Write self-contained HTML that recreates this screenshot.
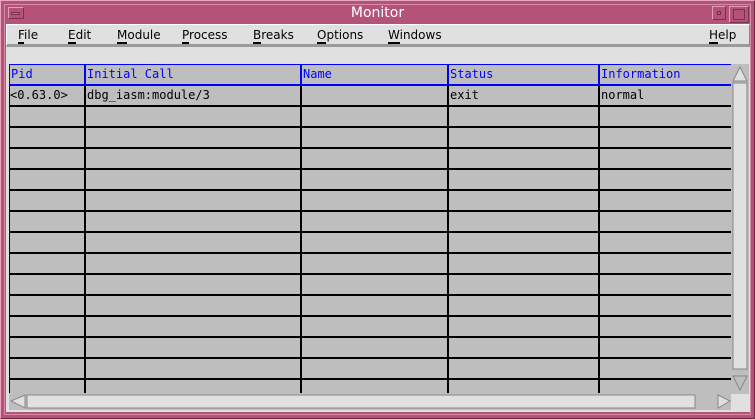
<!DOCTYPE html>
<html><head><style>
*{margin:0;padding:0;box-sizing:border-box}
body{width:755px;height:419px;background:#b45277;position:relative;overflow:hidden;font-family:"DejaVu Sans Mono","Liberation Mono",monospace}
.a{position:absolute}
.m{font-family:"DejaVu Sans","Liberation Sans",sans-serif;font-size:12px;color:#000;top:28px}
.m u{text-decoration:none;border-bottom:2px solid #000}
.t{font-size:12px;position:absolute}
</style></head><body>
<div class="a" style="left:0;top:0;width:755px;height:419px;border:1px solid #e8a8c0;border-right-color:#6e2a45;border-bottom-color:#6e2a45"></div>
<div class="a" style="top:4px;left:4px;width:747px;height:411px;border:1px solid #d88aa8"></div>
<div class="a" style="left:8px;top:7px;width:16px;height:12px;border:1px solid #e0a0b8;border-right-color:#7a3050;border-bottom-color:#7a3050"></div>
<div class="a" style="left:11px;top:12px;width:9px;height:3px;border:1px solid #7a3050;background:#c06a8a"></div>
<div class="a" style="left:0;top:5px;width:755px;text-align:center;color:#fff;font-family:'DejaVu Sans','Liberation Sans',sans-serif;font-size:14px">Monitor</div>
<div class="a" style="left:712px;top:6px;width:14px;height:14px;border:1px solid #e0a0b8;border-right-color:#7a3050;border-bottom-color:#7a3050"></div>
<div class="a" style="left:717px;top:11px;width:4px;height:4px;border:1px solid #7a3050"></div>
<div class="a" style="left:729px;top:6px;width:20px;height:17px;border:1px solid #e0a0b8;border-right-color:#7a3050;border-bottom-color:#7a3050"></div>
<div class="a" style="left:733px;top:9px;width:12px;height:11px;border:1px solid #7a3050"></div>
<div class="a" style="left:6px;top:24px;width:744px;height:388px;background:#e0e0e0"></div>
<div class="a" style="left:6px;top:24px;width:744px;height:23px;background:#e0e0e0;border:1px solid #fff;border-right-color:#888;border-bottom:3px solid #9a9a9a"></div>
<div class="a m" style="left:18px"><u>F</u>ile</div>
<div class="a m" style="left:68px"><u>E</u>dit</div>
<div class="a m" style="left:117px"><u>M</u>odule</div>
<div class="a m" style="left:182px"><u>P</u>rocess</div>
<div class="a m" style="left:253px"><u>B</u>reaks</div>
<div class="a m" style="left:317px"><u>O</u>ptions</div>
<div class="a m" style="left:388px"><u>W</u>indows</div>
<div class="a m" style="left:709px"><u>H</u>elp</div>
<div class="a" style="left:9px;top:64px;width:722px;height:330px;background:#bebebe"></div>
<svg class="a" style="left:0;top:0" width="755" height="419">
<g fill="#000">
<rect x="9" y="105" width="722" height="2"/><rect x="9" y="126" width="722" height="2"/><rect x="9" y="147" width="722" height="2"/><rect x="9" y="168" width="722" height="2"/><rect x="9" y="189" width="722" height="2"/><rect x="9" y="210" width="722" height="2"/><rect x="9" y="231" width="722" height="2"/><rect x="9" y="252" width="722" height="2"/><rect x="9" y="273" width="722" height="2"/><rect x="9" y="294" width="722" height="2"/><rect x="9" y="315" width="722" height="2"/><rect x="9" y="336" width="722" height="2"/><rect x="9" y="357" width="722" height="2"/><rect x="9" y="378" width="722" height="2"/>
<rect x="9" y="86" width="1" height="307"/>
<rect x="84" y="86" width="2" height="307"/><rect x="300" y="86" width="2" height="307"/><rect x="447" y="86" width="2" height="307"/><rect x="598" y="86" width="2" height="307"/>
</g>
<g fill="#0000ff">
<rect x="9" y="64" width="722" height="1"/><rect x="9" y="84" width="722" height="2"/>
<rect x="9" y="64" width="1" height="21"/><rect x="84" y="64" width="2" height="21"/><rect x="300" y="64" width="2" height="21"/><rect x="447" y="64" width="2" height="21"/><rect x="598" y="64" width="2" height="21"/>
</g>
<rect x="731" y="64" width="18" height="330" fill="#bebebe"/>
<rect x="733" y="83" width="14" height="286" fill="#e0e0e0" stroke="#888" stroke-width="1"/>
<path d="M733 81 L740 67 L747 81 Z" fill="#e0e0e0" stroke="#888"/>
<path d="M733 376 L740 390 L747 376 Z" fill="#bebebe" stroke="#888"/>
<rect x="9" y="393" width="722" height="17" fill="#bebebe"/>
<rect x="27" y="395" width="668" height="13" fill="#e0e0e0" stroke="#888"/>
<path d="M25 395 L11 401 L25 408 Z" fill="#e0e0e0" stroke="#888"/>
<path d="M718 395 L730 401 L718 408 Z" fill="#e0e0e0" stroke="#888"/>
</svg>
<div class="t" style="left:11px;top:67px;color:#00f">Pid</div>
<div class="t" style="left:87px;top:67px;color:#00f">Initial Call</div>
<div class="t" style="left:303px;top:67px;color:#00f">Name</div>
<div class="t" style="left:450px;top:67px;color:#00f">Status</div>
<div class="t" style="left:601px;top:67px;color:#00f">Information</div>
<div class="t" style="left:10px;top:88px">&lt;0.63.0&gt;</div>
<div class="t" style="left:87px;top:88px">dbg_iasm:module/3</div>
<div class="t" style="left:450px;top:88px">exit</div>
<div class="t" style="left:601px;top:88px">normal</div>
</body></html>
